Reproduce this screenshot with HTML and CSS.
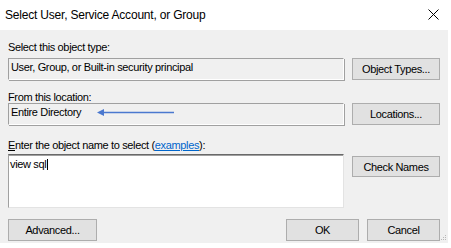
FILE: index.html
```html
<!DOCTYPE html>
<html lang="en">
<head>
  <meta charset="UTF-8" />
  <title>Select User, Service Account, or Group</title>
  <link rel="stylesheet" href="styles.css">
</head>
<body>
  <div class="dialog">
    <div class="titlebar">
      <span class="title">Select User, Service Account, or Group</span>
      <svg class="close" width="11" height="11" viewBox="0 0 11 11">
        <path d="M0.5 0.5 L10.5 10.5 M10.5 0.5 L0.5 10.5" stroke="#000" stroke-width="1" fill="none" />
      </svg>
    </div>

    <div class="content">
      <div class="label label-type">Select this object type:</div>
      <div class="row">
        <div class="field readonly">User, Group, or Built-in security principal</div>
        <button class="btn">Object Types...</button>
      </div>

      <div class="label label-loc">From this location:</div>
      <div class="row">
        <div class="field readonly with-arrow">
          Entire Directory
          <!-- annotation arrow drawn over the field -->
          <svg class="arrow" width="80" height="9" viewBox="0 0 80 9">
            <path d="M6 4.5 H77" stroke="#4a78cf" stroke-width="1.5" />
            <path d="M0 4.5 L7 1 L7 8 Z" fill="#4a78cf" />
          </svg>
        </div>
        <button class="btn">Locations...</button>
      </div>

      <div class="label label-name"><u>E</u>nter the object name to select (<a href="#" class="link">examples</a>):</div>
      <div class="row">
        <div class="field multi">view sql<span class="caret"></span></div>
        <button class="btn btn-check">Check Names</button>
      </div>

      <div class="footer">
        <button class="btn btn-adv">Advanced...</button>
        <span class="spacer"></span>
        <button class="btn btn-small">OK</button>
        <button class="btn btn-small">Cancel</button>
      </div>

      <svg class="grip" width="6" height="6" viewBox="0 0 6 6">
        <rect x="4" y="0" width="1" height="1" fill="#b8b8b8" />
        <rect x="2" y="2" width="1" height="1" fill="#b8b8b8" />
        <rect x="4" y="2" width="1" height="1" fill="#b8b8b8" />
        <rect x="0" y="4" width="1" height="1" fill="#b8b8b8" />
        <rect x="2" y="4" width="1" height="1" fill="#b8b8b8" />
        <rect x="4" y="4" width="1" height="1" fill="#b8b8b8" />
      </svg>
    </div>
  </div>
</body>
</html>
```

FILE: styles.css
```css
body {
  margin: 0;
  background-color: #fff;
  font-family: 'Liberation Sans', Arial, sans-serif;
  font-size: 11px;
  letter-spacing: -0.35px;
  color: #000;
}
.dialog {
  width: 448px;
}
.titlebar {
  height: 30px;
  background-color: #fff;
  display: flex;
  align-items: center;
  justify-content: space-between;
  padding: 0 9px 0 5px;
}
.title {
  font-size: 12px;
  letter-spacing: -0.2px;
  margin-top: -1px;
}
.close {
  display: block;
  margin-top: -2px;
}
.content {
  background-color: #f0f0f0;
  padding: 11px 8px 2px 8px;
  position: relative;
}
.label {
  line-height: 12px;
  height: 12px;
}
.label-type {
  margin-bottom: 5px;
}
.label-loc {
  margin-top: 11px;
}
.label-name {
  margin-top: 14px;
  margin-bottom: 3px;
}
.link {
  color: #0066cc;
}
.row {
  display: grid;
  grid-template-columns: 336px 88px;
  column-gap: 8px;
  align-items: start;
}
.field {
  box-sizing: border-box;
  height: 22px;
  line-height: 14px;
  padding: 1px 2px;
  white-space: nowrap;
}
.readonly {
  background-color: #f0f0f0;
  border: 1px solid #a0a0a0;
  border-right-color: #fff;
  border-bottom-color: #fff;
  box-shadow: 1px 1px 0 #a0a0a0;
}
.with-arrow {
  position: relative;
}
.arrow {
  position: absolute;
  left: 88px;
  top: 4px;
}
.multi {
  height: 54px;
  background-color: #fff;
  padding: 2px 1px;
  border-top: 1px solid #696969;
  border-left: 1px solid #a0a0a0;
  border-right: 1px solid #e3e3e3;
  border-bottom: 1px solid #e3e3e3;
  box-shadow: inset 0 1px 0 #a0a0a0;
}
.caret {
  display: inline-block;
  width: 1px;
  height: 11px;
  background-color: #000;
  vertical-align: -2px;
  margin-left: 1px;
}
.btn {
  box-sizing: border-box;
  height: 22px;
  padding: 0;
  background-color: #e1e1e1;
  border: 1px solid #adadad;
  font-family: 'Liberation Sans', Arial, sans-serif;
  font-size: 11px;
  letter-spacing: -0.35px;
  color: #000;
}
.btn-check {
  margin-top: 2px;
  height: 21px;
}
.footer {
  display: flex;
  gap: 8px;
  margin-top: 11px;
}
.btn-adv {
  width: 89px;
}
.btn-small {
  width: 73px;
}
.spacer {
  flex: 1;
}
.grip {
  position: absolute;
  right: 1px;
  bottom: 2px;
}
```
